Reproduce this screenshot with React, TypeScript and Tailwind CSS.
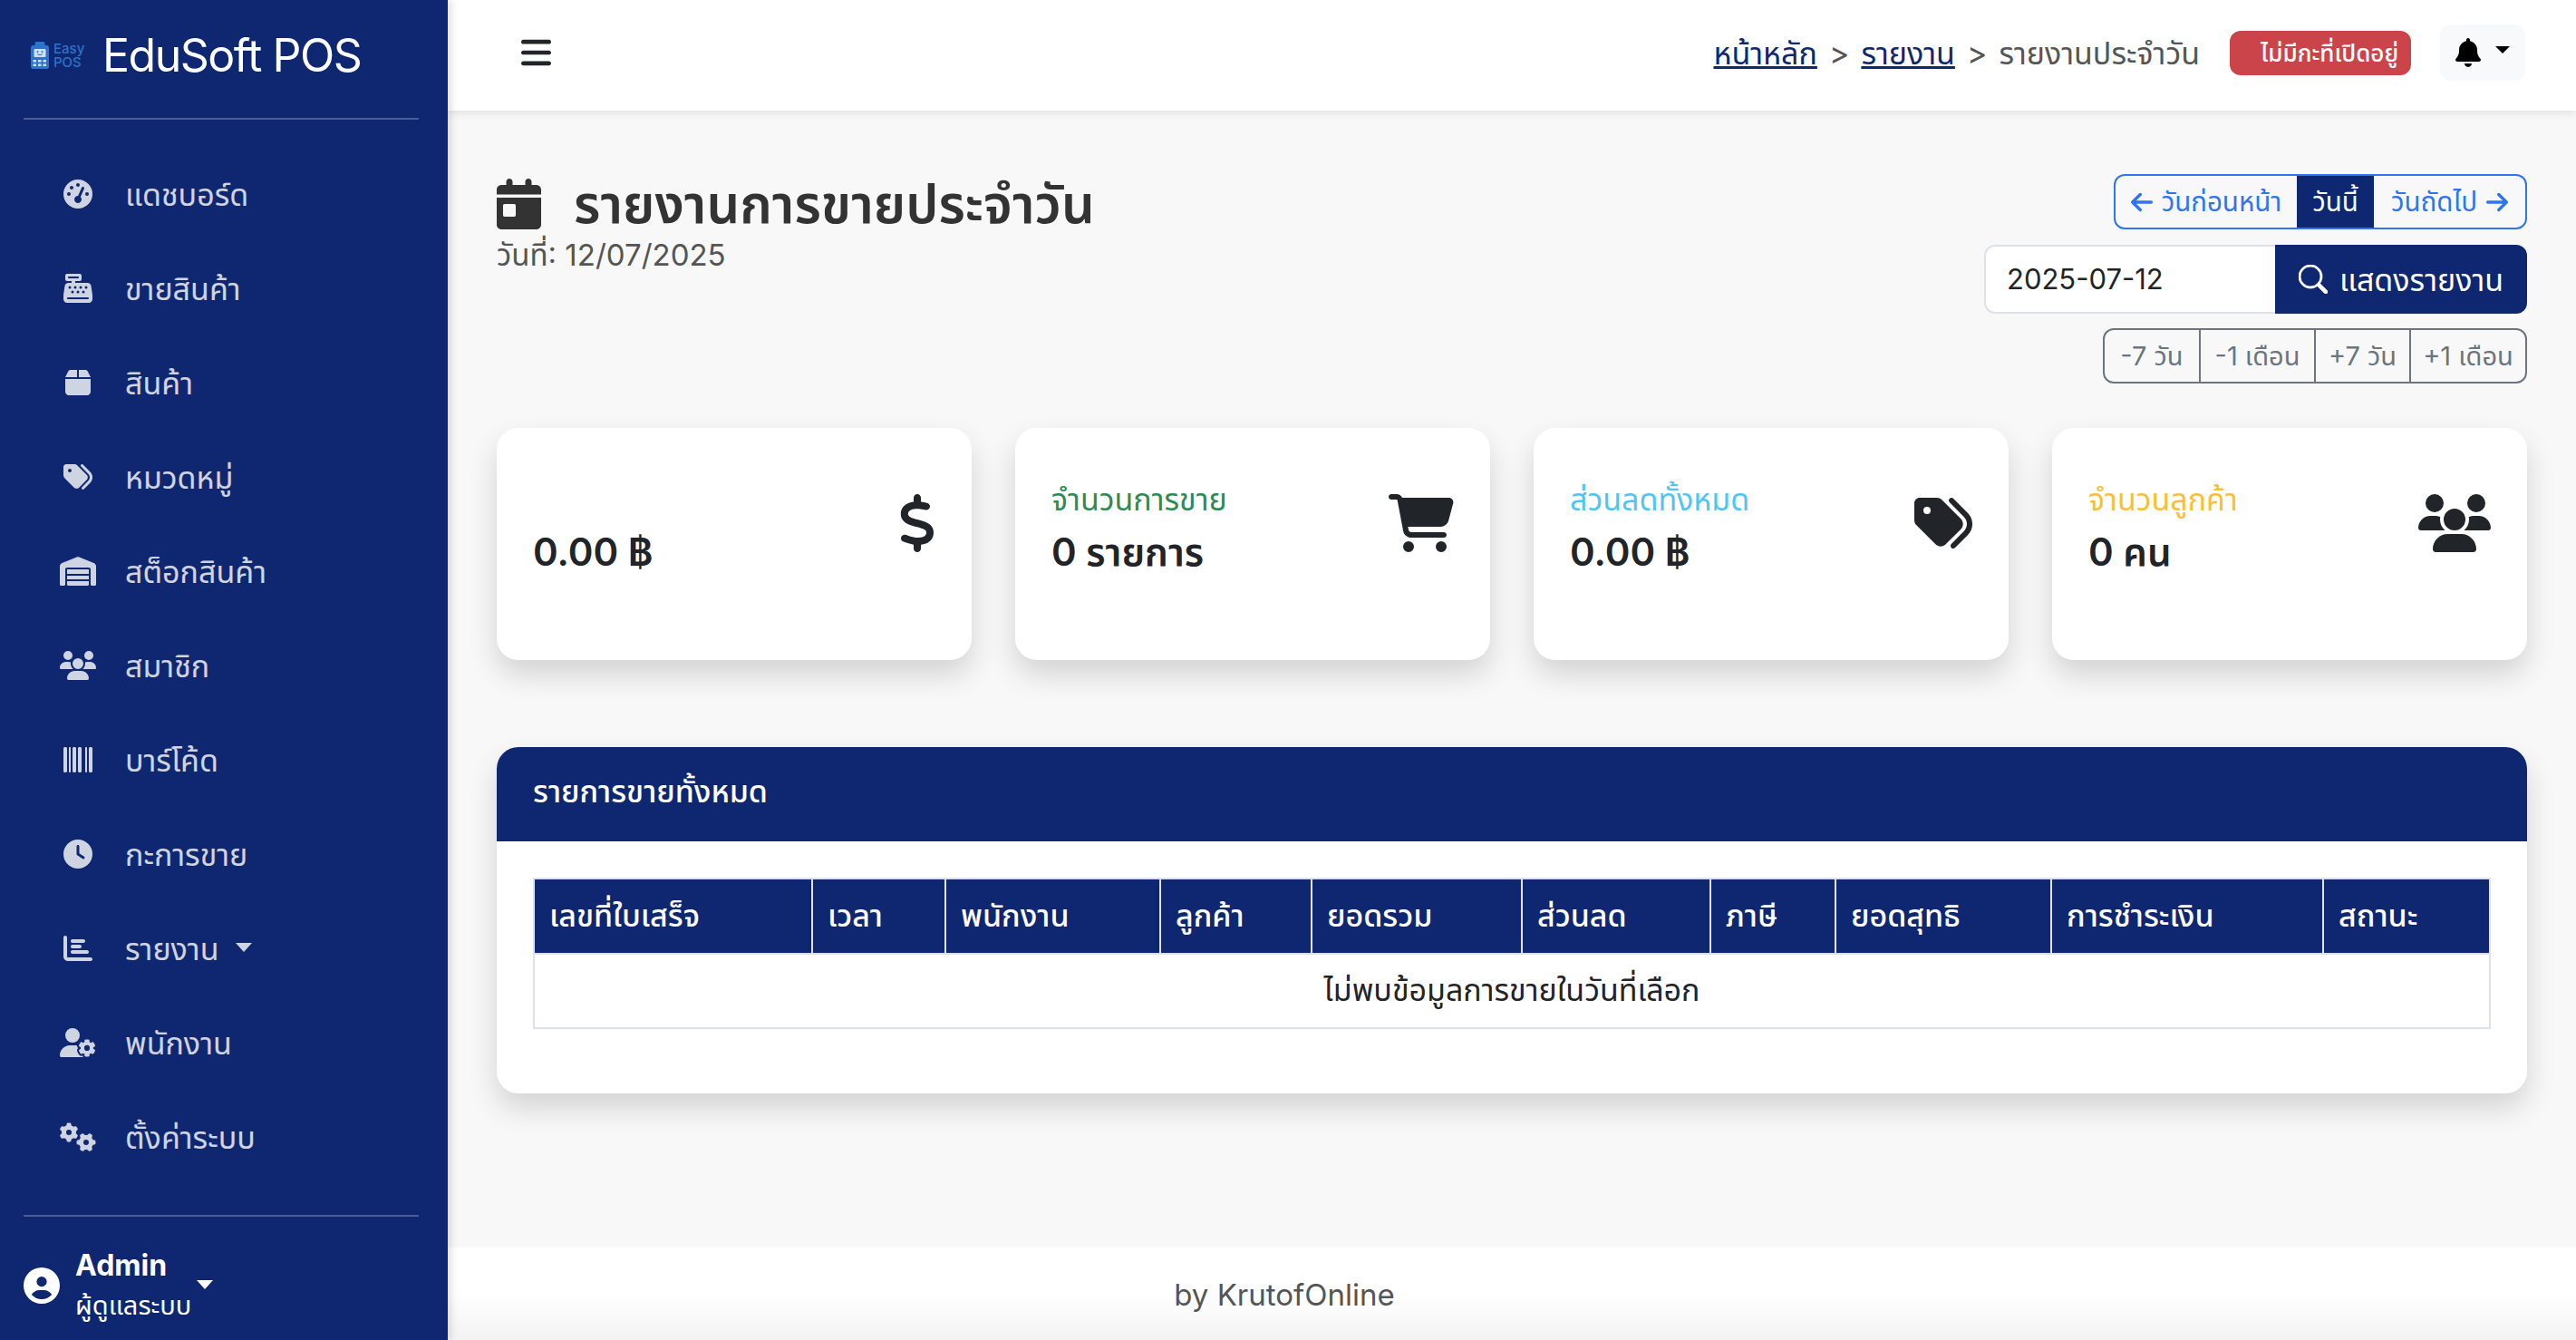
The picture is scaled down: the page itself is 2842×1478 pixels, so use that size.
import React from 'react';
import { BsSearch } from 'react-icons/bs';
import {
  FaArrowLeft,
  FaArrowRight,
  FaBars,
  FaBarcode,
  FaBell,
  FaBox,
  FaCalendarDay,
  FaCartShopping,
  FaCashRegister,
  FaChartBar,
  FaCircleUser,
  FaClock,
  FaDollarSign,
  FaGaugeHigh,
  FaGears,
  FaTags,
  FaUserGear,
  FaUsers,
  FaWarehouse,
} from 'react-icons/fa6';

// svg width attr wins over w-auto, so wide glyphs need their width spelled out
const NAV_ITEMS = [
  { label: 'แดชบอร์ด', icon: FaGaugeHigh, iconClass: 'w-[32px]' },
  { label: 'ขายสินค้า', icon: FaCashRegister, iconClass: 'w-[32px]' },
  { label: 'สินค้า', icon: FaBox, iconClass: 'w-[28px]' },
  { label: 'หมวดหมู่', icon: FaTags, iconClass: 'w-[32px]' },
  { label: 'สต็อกสินค้า', icon: FaWarehouse, iconClass: 'w-[40px]' },
  { label: 'สมาชิก', icon: FaUsers, iconClass: 'w-[40px]' },
  { label: 'บาร์โค้ด', icon: FaBarcode, iconClass: 'w-[32px]' },
  { label: 'กะการขาย', icon: FaClock, iconClass: 'w-[32px]' },
  { label: 'รายงาน', icon: FaChartBar, iconClass: 'w-[32px]', caret: true },
  { label: 'พนักงาน', icon: FaUserGear, iconClass: 'w-[40px]' },
  { label: 'ตั้งค่าระบบ', icon: FaGears, iconClass: 'w-[40px]' },
];

const COLUMNS = [
  { label: 'เลขที่ใบเสร็จ', width: 'w-[307px]' },
  { label: 'เวลา', width: 'w-[147px]' },
  { label: 'พนักงาน', width: 'w-[237px]' },
  { label: 'ลูกค้า', width: 'w-[167px]' },
  { label: 'ยอดรวม', width: 'w-[232px]' },
  { label: 'ส่วนลด', width: 'w-[208px]' },
  { label: 'ภาษี', width: 'w-[138px]' },
  { label: 'ยอดสุทธิ', width: 'w-[238px]' },
  { label: 'การชำระเงิน', width: 'w-[300px]' },
  { label: 'สถานะ', width: 'w-[184px]' },
];

const STATS = [
  { id: 'total', label: '', labelClass: 'text-white', value: '0.00 ฿', icon: FaDollarSign, iconClass: 'w-[40px]' },
  { id: 'sales', label: 'จำนวนการขาย', labelClass: 'text-[#2e8b57]', value: '0 รายการ', icon: FaCartShopping, iconClass: 'w-[72px]' },
  { id: 'discount', label: 'ส่วนลดทั้งหมด', labelClass: 'text-[#4fc6f0]', value: '0.00 ฿', icon: FaTags, iconClass: 'w-[64px]' },
  { id: 'customers', label: 'จำนวนลูกค้า', labelClass: 'text-[#f8bf3a]', value: '0 คน', icon: FaUsers, iconClass: 'w-[80px]' },
];

const Caret: React.FC<{ className?: string }> = ({ className = '' }) => (
  <span className={`inline-block w-0 h-0 border-x-[9px] border-t-[10px] border-x-transparent border-t-current ${className}`} />
);

const Logo: React.FC = () => (
  <div className="flex items-center gap-[4px] w-[62px] text-[#2f72c9]">
    <svg viewBox="0 0 22 30" className="w-[23px] h-[30px] shrink-0" fill="currentColor">
      <rect x="6" y="0" width="11" height="5" rx="1.5" />
      <rect x="1.5" y="4" width="20" height="26" rx="2.5" />
      <rect x="5" y="8" width="13" height="9" rx="1" fill="#cfe0f7" />
      <circle cx="9" cy="11" r="1" fill="#2f72c9" />
      <circle cx="14" cy="11" r="1" fill="#2f72c9" />
      <path d="M8.5 13.5q3 2.5 6 0" stroke="#2f72c9" strokeWidth="1" fill="none" />
      <g fill="#cfe0f7">
        <rect x="4" y="20" width="3.5" height="2.5" />
        <rect x="9.5" y="20" width="3.5" height="2.5" />
        <rect x="15" y="20" width="3.5" height="2.5" />
        <rect x="4" y="24.5" width="3.5" height="2.5" />
        <rect x="9.5" y="24.5" width="3.5" height="2.5" />
        <rect x="15" y="24.5" width="3.5" height="2.5" />
      </g>
    </svg>
    <div className="flex flex-col text-[15px] leading-[15px] font-medium">
      <span>Easy</span>
      <span>POS</span>
    </div>
  </div>
);

const Sidebar: React.FC = () => (
  <aside className="w-[494px] shrink-0 h-full bg-[#0f2770] flex flex-col shadow-[4px_0_8px_rgba(0,0,0,0.12)] z-10">
    <div className="h-[130px] px-[32px] pb-[8px] flex items-center gap-[19px]">
      <Logo />
      <span className="text-[50px] text-white leading-none tracking-[-1.5px]">EduSoft POS</span>
    </div>
    <div className="ml-[26px] mr-[32px] h-[2px] bg-white/25" />
    <ul className="mt-[30px] flex flex-col">
      {NAV_ITEMS.map(({ label, icon: Icon, iconClass, caret }) => (
        <li key={label} className="h-[104px] pl-[66px] flex items-center text-white/80 text-[34px]">
          <span className="w-[40px] flex justify-center">
            <Icon className={`h-[32px] shrink-0 ${iconClass}`} />
          </span>
          <span className="ml-[32px] pt-[2px] leading-none">{label}</span>
          {caret && <Caret className="ml-[18px] mb-[3px]" />}
        </li>
      ))}
    </ul>
    <div className="mt-[34px] ml-[26px] mr-[32px] h-[2px] bg-white/25" />
    <div className="flex-1 px-[26px] pt-[16px] flex items-center text-white">
      <FaCircleUser className="h-[40px] w-[40px] shrink-0" />
      <div className="ml-[17px] flex flex-col">
        <span className="text-[32px] font-bold leading-[44px]">Admin</span>
        <span className="text-[29px] leading-[44px]">ผู้ดูแลระบบ</span>
      </div>
      <Caret className="ml-[6px] mb-[2px]" />
    </div>
  </aside>
);

const TopBar: React.FC = () => (
  <nav className="h-[122px] shrink-0 bg-white shadow-[0_4px_8px_rgba(0,0,0,0.08)] flex items-center pl-[81px] pr-[56px] pb-[6px] z-[5]">
    <FaBars className="h-[38px] w-[33px] text-[#212529]" />
    <div className="ml-auto flex items-center text-[34px] text-[#555]">
      <span className="underline text-[#0f2770]">หน้าหลัก</span>
      <span className="mx-[13px]">&gt;</span>
      <span className="underline text-[#0f2770]">รายงาน</span>
      <span className="mx-[13px]">&gt;</span>
      <span>รายงานประจำวัน</span>
    </div>
    <span className="ml-[33px] h-[49px] w-[200px] pl-[34px] rounded-[12px] bg-[#cb444a] text-white text-[26px] font-medium flex items-center whitespace-nowrap">
      ไม่มีกะที่เปิดอยู่
    </span>
    <button className="ml-[32px] w-[94px] h-[62px] rounded-[12px] bg-[#f8f9fa] flex items-center justify-center text-black">
      <FaBell className="h-[32px] w-[28px]" />
      <Caret className="ml-[16px] mb-[6px] !border-x-[8px] !border-t-[8px]" />
    </button>
  </nav>
);

const DateControls: React.FC = () => (
  <div className="flex flex-col items-end">
    <div className="h-[61px] flex rounded-[12px] border-2 border-[#2f75ee] text-[#2f75ee] text-[29.5px] overflow-hidden">
      <span className="w-[200px] flex items-center justify-center gap-[10px] whitespace-nowrap">
        <FaArrowLeft className="h-[28px] w-[24px]" />
        วันก่อนหน้า
      </span>
      <span className="w-[85px] bg-[#0f2770] text-white flex items-center justify-center">วันนี้</span>
      <span className="w-[167px] flex items-center justify-center gap-[10px] whitespace-nowrap">
        วันถัดไป
        <FaArrowRight className="h-[28px] w-[24px]" />
      </span>
    </div>
    <div className="mt-[17px] h-[76px] flex">
      <div className="w-[321px] bg-white border-2 border-[#dee2e6] border-r-0 rounded-l-[12px] pl-[23px] flex items-center text-[31px] text-[#212529]">
        2025-07-12
      </div>
      <button className="w-[278px] bg-[#0f2770] text-white rounded-r-[12px] flex items-center justify-center gap-[13px] text-[34px]">
        <BsSearch className="h-[32px] w-[32px] stroke-[0.4]" />
        แสดงรายงาน
      </button>
    </div>
    <div className="mt-[16px] h-[61px] flex rounded-[12px] border-2 border-[#6c757d] text-[#6c757d] text-[29px]">
      <span className="w-[104px] flex items-center justify-center">-7 วัน</span>
      <span className="w-[127px] flex items-center justify-center border-l-2 border-[#6c757d]">-1 เดือน</span>
      <span className="w-[105px] flex items-center justify-center border-l-2 border-[#6c757d]">+7 วัน</span>
      <span className="w-[128px] flex items-center justify-center border-l-2 border-[#6c757d]">+1 เดือน</span>
    </div>
  </div>
);

const StatCard: React.FC<(typeof STATS)[number]> = ({ label, labelClass, value, icon: Icon, iconClass }) => (
  <div className="h-[256px] bg-white rounded-[24px] shadow-[0_16px_32px_rgba(0,0,0,0.15)] px-[40px] pt-[40px]">
    <div className="h-[130px] flex items-center justify-between">
      <div className="flex flex-col pt-[7px]">
        <span className={`text-[34px] leading-[48px] h-[48px] ${labelClass}`}>{label}</span>
        <span className="mt-[8px] text-[42px] leading-[52px] font-semibold text-[#212529]">{value}</span>
      </div>
      <Icon className={`h-[64px] shrink-0 text-[#212529] ${iconClass}`} />
    </div>
  </div>
);

const SalesTable: React.FC = () => (
  <div className="mt-[96px] h-[382px] bg-white rounded-[24px] shadow-[0_16px_32px_rgba(0,0,0,0.15)] overflow-hidden">
    <div className="h-[104px] bg-[#0f2770] px-[40px] pb-[8px] flex items-center text-white text-[34px] font-medium">
      รายการขายทั้งหมด
    </div>
    <div className="px-[40px] pt-[40px]">
      <table className="w-[2160px] table-fixed border-collapse text-[34px]">
        <thead>
          <tr className="h-[83px] bg-[#0f2770] text-white">
            {COLUMNS.map((col) => (
              <th key={col.label} className={`${col.width} border-2 border-[#dee2e6] px-[16px] pb-[3px] text-left font-medium`}>
                {col.label}
              </th>
            ))}
          </tr>
        </thead>
        <tbody>
          <tr className="h-[82px]">
            <td colSpan={10} className="border-2 border-[#dee2e6] pb-[3px] text-center text-[#212529]">
              ไม่พบข้อมูลการขายในวันที่เลือก
            </td>
          </tr>
        </tbody>
      </table>
    </div>
  </div>
);

export default function App() {
  return (
    <div className="h-screen w-full flex overflow-hidden font-['Inter','Noto_Sans_Thai','Noto_Sans',sans-serif]">
      <Sidebar />
      <main className="flex-1 min-w-0 h-full flex flex-col bg-[#f8f8f8]">
        <TopBar />
        <div className="flex-1 px-[54px] pt-[70px]">
          <div className="flex justify-between items-start">
            <div>
              <h1 className="flex items-center gap-[36px] text-[58px] leading-[66px] font-semibold text-[#333]">
                <FaCalendarDay className="h-[56px] w-[49px] shrink-0" />
                รายงานการขายประจำวัน
              </h1>
              <p className="text-[33px] leading-[46px] text-[#555]">วันที่: 12/07/2025</p>
            </div>
            <DateControls />
          </div>
          <div className="mt-[49px] grid grid-cols-4 gap-[48px]">
            {STATS.map((stat) => (
              <StatCard key={stat.id} {...stat} />
            ))}
          </div>
          <SalesTable />
        </div>
        <footer className="h-[102px] shrink-0 bg-gradient-to-b from-white via-white to-[#f3f3f3] pr-[502px] pt-[4px] flex items-center justify-center text-[33px] text-[#555]">
          by KrutofOnline
        </footer>
      </main>
    </div>
  );
}
